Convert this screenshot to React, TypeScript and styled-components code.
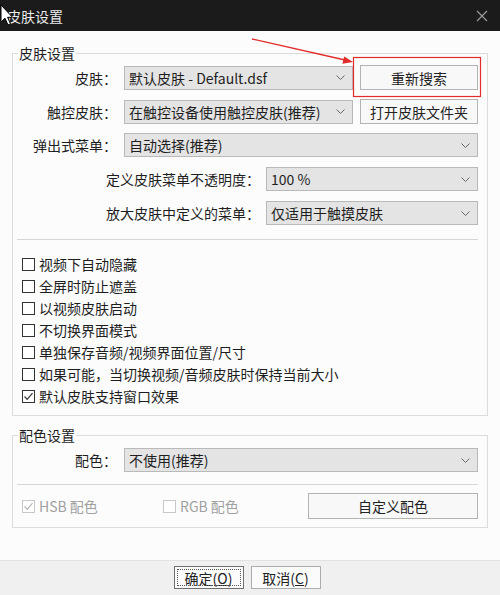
import styled, { createGlobalStyle } from "styled-components";

const GlobalStyle = createGlobalStyle`
  html, body {
    margin: 0;
    padding: 0;
    background: #fcfcfc;
  }
  body {
    font-family: "Noto Sans CJK SC", "Microsoft YaHei", sans-serif;
    font-size: 14px;
    color: #1e1e1e;
  }
`;

const Window = styled.div`
  position: relative;
  width: 500px;
  height: 595px;
  display: flex;
  flex-direction: column;
  background: #fcfcfc;
  overflow: hidden;
`;

const TitleBar = styled.div`
  flex: none;
  height: 31px;
  box-sizing: border-box;
  padding: 0 12px 0 7px;
  background: #1b1b1b;
  display: flex;
  align-items: center;
  justify-content: space-between;
`;

const TitleText = styled.span`
  color: #ececec;
  font-size: 14px;
  line-height: 18px;
`;

const Body = styled.div`
  flex: 1;
  padding: 22px 12px 0;
  display: flex;
  flex-direction: column;
  gap: 19px;
`;

const Group = styled.div`
  border: 1px solid #dcdcdc;
  padding: 0 9px 8px 0;
  display: flex;
  flex-direction: column;
`;

const Legend = styled.div`
  width: fit-content;
  margin: -9px 0 0 5px;
  padding: 0 1px;
  background: #fcfcfc;
  line-height: 16px;
  font-size: 14px;
`;

const FormList = styled.div<{ $top: number }>`
  display: flex;
  flex-direction: column;
  gap: 10px;
  margin-top: ${(p) => p.$top}px;
`;

const FormRow = styled.div<{ $labelWidth: number; $gap: number; $withButton?: boolean }>`
  display: grid;
  grid-template-columns: ${(p) => p.$labelWidth}px 1fr ${(p) => (p.$withButton ? "118px" : "")};
  column-gap: ${(p) => p.$gap}px;
  align-items: center;
  height: 24px;
  & > button {
    margin-left: -${(p) => p.$gap - 8}px;
  }
`;

const Label = styled.span`
  text-align: right;
  white-space: nowrap;
  line-height: 18px;
`;

const SelectBox = styled.div`
  height: 24px;
  box-sizing: border-box;
  border: 1px solid #b9b9b9;
  background: #e4e4e4;
  padding: 0 7px 0 4px;
  display: flex;
  align-items: center;
  justify-content: space-between;
  line-height: 22px;
  white-space: nowrap;
  overflow: hidden;
`;

const Button = styled.button<{ $height?: number }>`
  height: ${(p) => p.$height ?? 25}px;
  box-sizing: border-box;
  border: 1px solid #b3b3b3;
  background: #f8f8f8;
  font-family: inherit;
  font-size: 14px;
  color: #222;
  padding: 0;
  line-height: 18px;
`;

const Divider = styled.div<{ $top: number }>`
  height: 1px;
  background: #d6d6d6;
  margin: ${(p) => p.$top}px 0 0 4px;
`;

const CheckList = styled.div`
  margin-top: 13px;
  padding-left: 9px;
  display: flex;
  flex-direction: column;
`;

const CheckRow = styled.label<{ $disabled?: boolean }>`
  height: 22px;
  display: flex;
  align-items: center;
  gap: 4px;
  line-height: 18px;
  white-space: nowrap;
  color: ${(p) => (p.$disabled ? "#a0a0a0" : "#1e1e1e")};
`;

const Box = styled.span<{ $disabled?: boolean }>`
  width: 13px;
  height: 13px;
  box-sizing: border-box;
  border: 1px solid ${(p) => (p.$disabled ? "#c8c8c8" : "#333")};
  background: #fff;
  display: flex;
  align-items: center;
  justify-content: center;
  flex: none;
`;

const ColorRow = styled.div`
  margin-top: 8px;
  padding-left: 9px;
  display: grid;
  grid-template-columns: 141px 1fr 170px;
  align-items: center;
`;

const Footer = styled.div`
  flex: none;
  height: 35px;
  box-sizing: border-box;
  border-top: 1px solid #e2e2e2;
  background: #f0f0f0;
  padding: 5px 6px 0 0;
  display: flex;
  justify-content: center;
  align-items: flex-start;
  gap: 7px;
`;

const DialogButton = styled.button<{ $default?: boolean }>`
  width: 70px;
  height: 23px;
  box-sizing: border-box;
  border: 1px solid ${(p) => (p.$default ? "#6f6f6f" : "#adadad")};
  background: #fbfbfb;
  font-family: inherit;
  font-size: 14px;
  color: #222;
  padding: 0;
  line-height: 18px;
  outline: ${(p) => (p.$default ? "1px dotted #555" : "none")};
  outline-offset: -4px;
`;

const Overlay = styled.svg`
  position: absolute;
  left: 0;
  top: 0;
  pointer-events: none;
`;

const Chevron = () => (
  <svg width="9" height="5" viewBox="0 0 9 5">
    <polyline points="0.5,0.5 4.5,4.5 8.5,0.5" fill="none" stroke="#666" strokeWidth="1" />
  </svg>
);

const Select = ({ value }: { value: string }) => (
  <SelectBox>
    <span>{value}</span>
    <Chevron />
  </SelectBox>
);

const Check = ({ label, checked, disabled }: { label: string; checked?: boolean; disabled?: boolean }) => (
  <CheckRow $disabled={disabled}>
    <Box $disabled={disabled}>
      {checked && (
        <svg width="11" height="11" viewBox="0 0 11 11">
          <polyline
            points="1.5,5.5 4.2,8.3 9.5,2.2"
            fill="none"
            stroke={disabled ? "#b5b5b5" : "#333"}
            strokeWidth="1.2"
          />
        </svg>
      )}
    </Box>
    {label}
  </CheckRow>
);

const options = [
  "视频下自动隐藏",
  "全屏时防止遮盖",
  "以视频皮肤启动",
  "不切换界面模式",
  "单独保存音频/视频界面位置/尺寸",
  "如果可能，当切换视频/音频皮肤时保持当前大小",
];

export default function App() {
  return (
    <Window>
      <GlobalStyle />
      <TitleBar>
        <TitleText>皮肤设置</TitleText>
        <svg width="12" height="12" viewBox="0 0 12 12">
          <path d="M1 1 L11 11 M11 1 L1 11" stroke="#9a9a9a" strokeWidth="1.2" />
        </svg>
      </TitleBar>

      <Body>
        <Group>
          <Legend>皮肤设置</Legend>
          <FormList $top={4}>
            <FormRow $labelWidth={104} $gap={7} $withButton>
              <Label>皮肤：</Label>
              <Select value="默认皮肤 - Default.dsf" />
              <Button>重新搜索</Button>
            </FormRow>
            <FormRow $labelWidth={104} $gap={7} $withButton>
              <Label>触控皮肤：</Label>
              <Select value="在触控设备使用触控皮肤(推荐)" />
              <Button>打开皮肤文件夹</Button>
            </FormRow>
            <FormRow $labelWidth={104} $gap={7}>
              <Label>弹出式菜单：</Label>
              <Select value="自动选择(推荐)" />
            </FormRow>
            <FormRow $labelWidth={247} $gap={6}>
              <Label>定义皮肤菜单不透明度：</Label>
              <Select value="100 %" />
            </FormRow>
            <FormRow $labelWidth={247} $gap={6}>
              <Label>放大皮肤中定义的菜单：</Label>
              <Select value="仅适用于触摸皮肤" />
            </FormRow>
          </FormList>
          <Divider $top={14} />
          <CheckList>
            {options.map((o) => (
              <Check key={o} label={o} />
            ))}
            <Check label="默认皮肤支持窗口效果" checked />
          </CheckList>
        </Group>

        <Group>
          <Legend>配色设置</Legend>
          <FormList $top={5}>
            <FormRow $labelWidth={104} $gap={7}>
              <Label>配色：</Label>
              <Select value="不使用(推荐)" />
            </FormRow>
          </FormList>
          <Divider $top={12} />
          <ColorRow>
            <Check label="HSB 配色" checked disabled />
            <Check label="RGB 配色" disabled />
            <Button $height={26}>自定义配色</Button>
          </ColorRow>
        </Group>
      </Body>

      <Footer>
        <DialogButton $default>确定(<u>O</u>)</DialogButton>
        <DialogButton>取消(<u>C</u>)</DialogButton>
      </Footer>

      <Overlay width="500" height="595" viewBox="0 0 500 595">
        <line x1="252" y1="39" x2="345" y2="60" stroke="#e32b2b" strokeWidth="1.3" />
        <polygon points="353,62 342.4,63.8 344.2,56.6" fill="#e32b2b" />
        <rect x="353.5" y="57.5" width="127" height="39" fill="none" stroke="#e32b2b" strokeWidth="1.2" />
        <path
          d="M1 5 L1 22 L5 18.2 L8 25 L10.5 24 L7.6 17.3 L12.5 17.3 Z"
          fill="#fff"
          stroke="#000"
          strokeWidth="1"
          strokeLinejoin="round"
        />
      </Overlay>
    </Window>
  );
}
